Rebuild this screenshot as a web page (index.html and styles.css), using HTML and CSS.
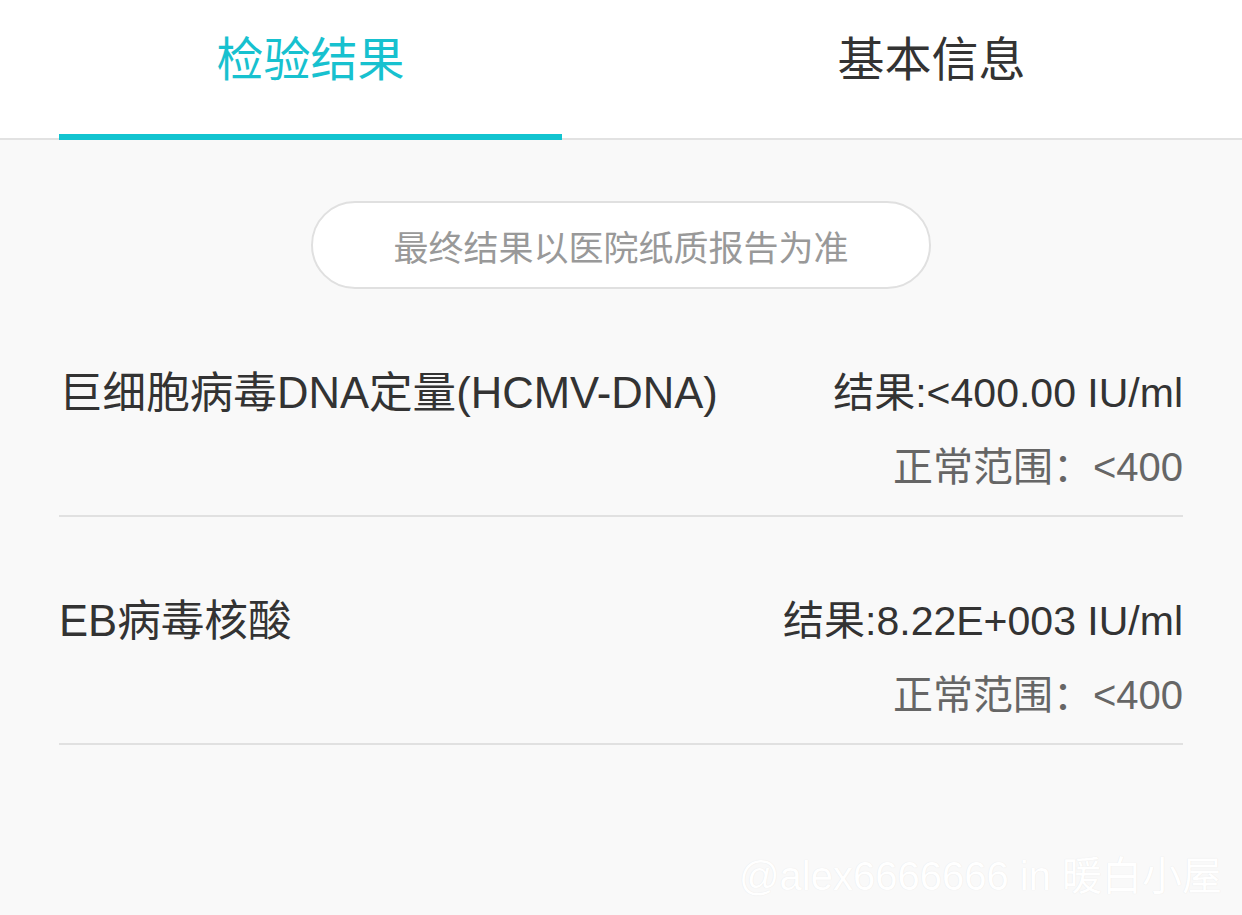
FILE: index.html
```html
<!DOCTYPE html>
<html lang="zh-CN">
<head>
<meta charset="utf-8">
<title>检验结果</title>
<link rel="stylesheet" href="styles.css">
</head>
<body>
<div class="page">
  <header class="tabs">
    <div class="tab active"><span class="tab-label">检验结果</span><span class="indicator"></span></div>
    <div class="tab"><span class="tab-label">基本信息</span></div>
  </header>
  <main class="content">
    <div class="notice-wrap">
      <div class="notice">最终结果以医院纸质报告为准</div>
    </div>
    <ul class="results">
      <li class="row">
        <div class="name">巨细胞病毒DNA定量(HCMV-DNA)</div>
        <div class="values">
          <div class="value">结果:&lt;400.00 IU/ml</div>
          <div class="range">正常范围：&lt;400</div>
        </div>
      </li>
      <li class="row">
        <div class="name">EB病毒核酸</div>
        <div class="values">
          <div class="value">结果:8.22E+003 IU/ml</div>
          <div class="range">正常范围：&lt;400</div>
        </div>
      </li>
    </ul>
  </main>
  <div class="watermark">@alex6666666 in 暖白小屋</div>
</div>
</body>
</html>
```
FILE: styles.css
```css
* { box-sizing: border-box; }
html, body {
  margin: 0;
  padding: 0;
  height: 100%;
}
body {
  background: #f9f9f9;
  font-family: "Liberation Sans", "Noto Sans CJK SC", sans-serif;
  color: #333;
}
.page {
  position: relative;
  min-height: 915px;
  overflow: hidden;
}
.tabs {
  display: flex;
  height: 140px;
  background: #fff;
  border-bottom: 2px solid #e2e2e2;
}
.tab {
  position: relative;
  flex: 1;
  display: flex;
  justify-content: center;
  padding-top: 30px;
}
.tab-label {
  font-size: 47px;
  line-height: 60px;
  color: #333;
}
.tab.active .tab-label { color: #17c1cf; }
.indicator {
  position: absolute;
  left: 59px;
  right: 59px;
  bottom: -2px;
  height: 6px;
  background: #12c4d0;
}
.content {
  padding: 0 59px;
}
.notice-wrap {
  display: flex;
  justify-content: center;
  padding-top: 61px;
}
.notice {
  width: 620px;
  height: 88px;
  border: 2px solid #e0e0e0;
  border-radius: 44px;
  background: #fff;
  display: flex;
  align-items: center;
  justify-content: center;
  font-size: 35px;
  color: #999;
}
.results {
  list-style: none;
  margin: 0;
  padding: 0;
}
.row {
  display: flex;
  justify-content: space-between;
  align-items: flex-start;
  padding: 81px 0 25px;
  border-bottom: 2px solid #e1e1e1;
}
.name {
  font-size: 43.6px;
  line-height: 46px;
  color: #333;
}
.values {
  text-align: right;
}
.value {
  font-size: 41px;
  line-height: 46px;
  color: #333;
}
.range {
  margin-top: 28px;
  font-size: 40px;
  line-height: 46px;
  color: #666;
}
.watermark {
  position: absolute;
  right: 20px;
  top: 853px;
  font-size: 40px;
  line-height: 46px;
  color: #ffffff;
  text-shadow: 0 0 1px rgba(0,0,0,0.1);
}
```
